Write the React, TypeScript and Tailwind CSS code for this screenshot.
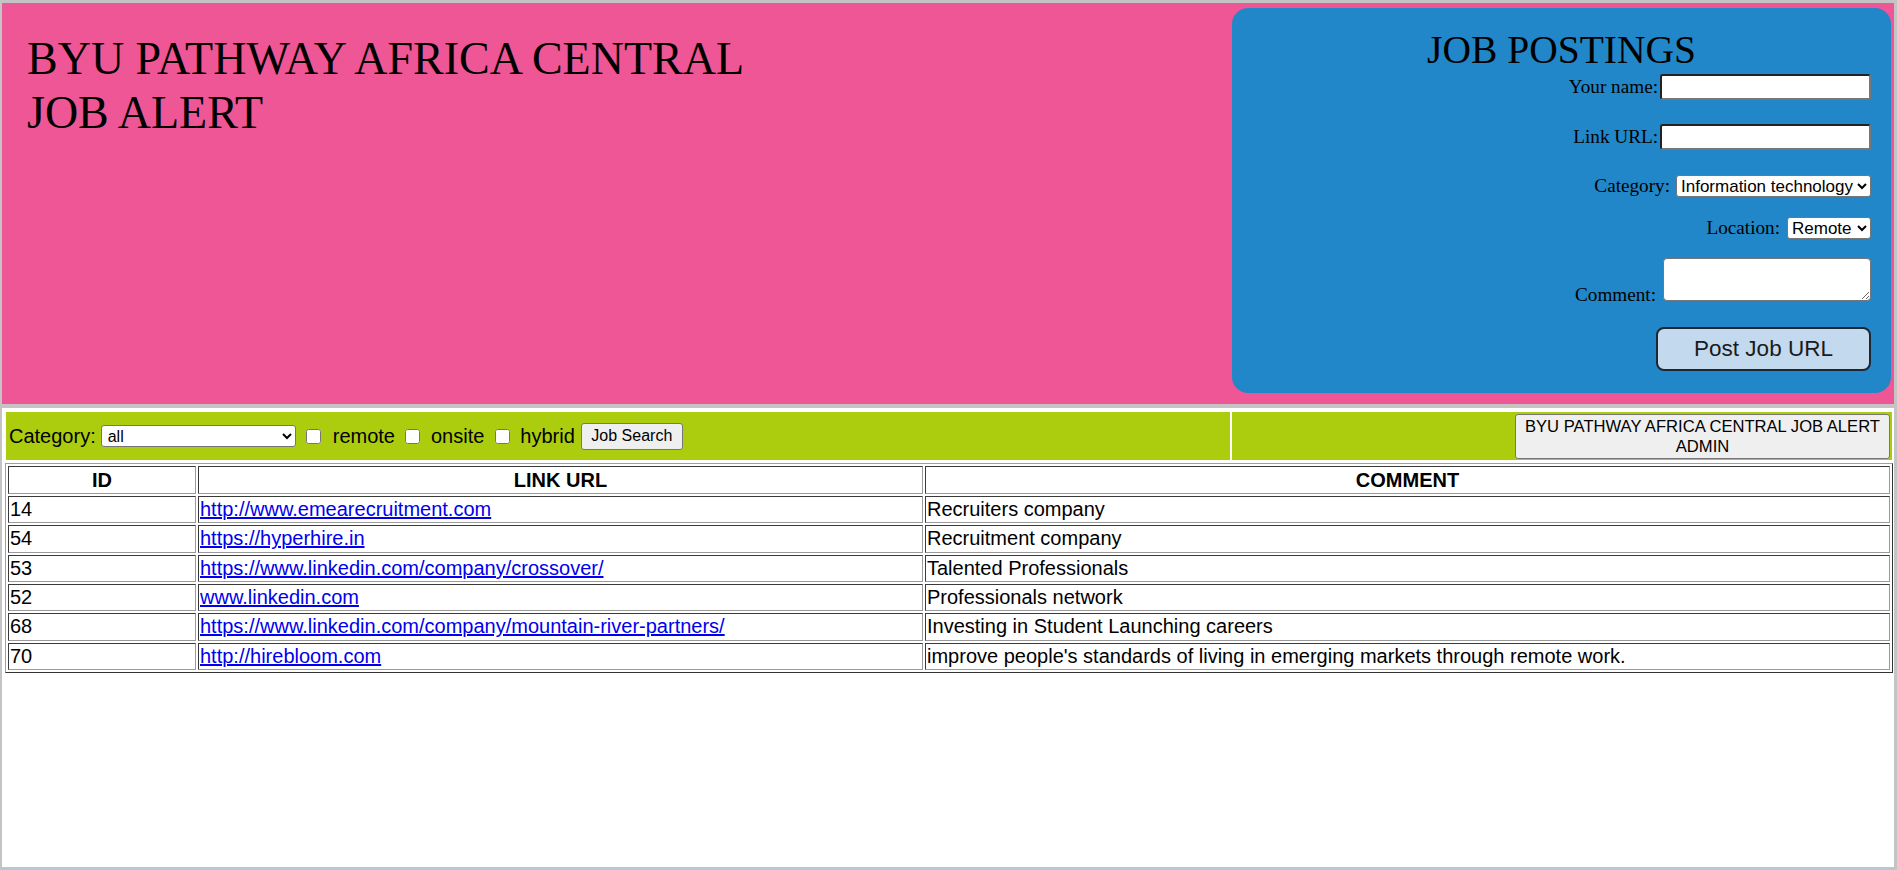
import React from "react"

const jobs = [
  { id: 14, url: "http://www.emearecruitment.com", comment: "Recruiters company" },
  { id: 54, url: "https://hyperhire.in", comment: "Recruitment company" },
  { id: 53, url: "https://www.linkedin.com/company/crossover/", comment: "Talented Professionals" },
  { id: 52, url: "www.linkedin.com", comment: "Professionals network" },
  { id: 68, url: "https://www.linkedin.com/company/mountain-river-partners/", comment: "Investing in Student Launching careers" },
  { id: 70, url: "http://hirebloom.com", comment: "improve people's standards of living in emerging markets through remote work." },
]

const cell =
  "border border-t-[#3a3a3a] border-l-[#3a3a3a] border-r-[#9a9a9a] border-b-[#9a9a9a] p-[1px] align-middle"

const field =
  "bg-white border-2 border-t-[#222] border-l-[#222] border-r-[#777] border-b-[#777] rounded-[3px]"

const PostForm = () => {
  return (
    <div className="w-[659px] h-[385px] mt-[5px] mr-[3px] rounded-[16px] bg-[#2187c9] flex flex-col font-['Liberation_Serif',serif] text-black">
      <h2 className="self-center pt-[22px] text-[39.5px] leading-[40px] font-normal">JOB POSTINGS</h2>
      <div className="flex flex-col items-end pr-[20px] text-[19.2px] leading-[22px]">
        <div className="mt-[4px] h-[26px] flex items-center">
          <label className="mr-[2px]">Your name:</label>
          <input className={`w-[211px] h-[26px] ${field}`} />
        </div>
        <div className="mt-[24px] h-[26px] flex items-center">
          <label className="mr-[2px]">Link URL:</label>
          <input className={`w-[211px] h-[26px] ${field}`} />
        </div>
        <div className="mt-[25px] h-[22px] flex items-center">
          <label className="mr-[6px]">Category:</label>
          <select
            defaultValue="it"
            className="w-[195px] h-[22px] bg-white border border-[#767676] rounded-[3px] font-['Liberation_Sans',sans-serif] text-[17px] leading-[20px]"
          >
            <option value="it">Information technology</option>
          </select>
        </div>
        <div className="mt-[20px] h-[22px] flex items-center">
          <label className="mr-[7px]">Location:</label>
          <select
            defaultValue="remote"
            className="w-[84px] h-[22px] bg-white border border-[#767676] rounded-[3px] font-['Liberation_Sans',sans-serif] text-[17px] leading-[20px]"
          >
            <option value="remote">Remote</option>
          </select>
        </div>
        <div className="mt-[19px] h-[43px] flex items-end">
          <label className="mr-[7px] mb-[-5px]">Comment:</label>
          <textarea className="w-[208px] h-[43px] bg-white border border-[#767676] rounded-[4px] resize" />
        </div>
        <button className="mt-[26px] w-[215px] h-[44px] rounded-[8px] border-2 border-[#1d2733] bg-[#c3d9ee] font-['Liberation_Sans',sans-serif] text-[22.5px] text-[#1b1b1b]">
          Post Job URL
        </button>
      </div>
    </div>
  )
}

export default function App() {
  return (
    <div className="w-[1897px] h-[870px] bg-[#c4c4c4] pt-[3px] pl-[2px] pr-[3px] flex flex-col">
      <header className="h-[401px] bg-[#ef5695] flex justify-between">
        <h1 className="pl-[25px] pt-[29px] font-['Liberation_Serif',serif] text-[46px] leading-[54px] font-normal text-black">
          BYU PATHWAY AFRICA CENTRAL
          <br />
          JOB ALERT
        </h1>
        <PostForm />
      </header>

      <main className="mt-[4px] flex-1 bg-white border-b-[3px] border-b-[#bac6d2] font-['Liberation_Sans',sans-serif] text-black">
        <div className="mt-[4px] ml-[4px] flex gap-[2px] h-[48px]">
          <div className="w-[1224px] bg-[#abcd0e] flex items-center pl-[3px] text-[20px]">
            <span>Category:</span>
            <select
              defaultValue="all"
              className="ml-[5px] w-[195px] h-[22px] bg-white border border-[#767676] rounded-[3px] text-[16px] leading-[20px] pl-[2px]"
            >
              <option value="all">all</option>
            </select>
            <input type="checkbox" className="ml-[10px] w-[15px] h-[15px]" />
            <span className="ml-[12px]">remote</span>
            <input type="checkbox" className="ml-[10px] w-[15px] h-[15px]" />
            <span className="ml-[11px]">onsite</span>
            <input type="checkbox" className="ml-[11px] w-[15px] h-[15px]" />
            <span className="ml-[10px]">hybrid</span>
            <button className="ml-[6px] w-[102px] h-[27px] bg-[#efefef] border border-[#767676] rounded-[3px] text-[16px]">
              Job Search
            </button>
          </div>
          <div className="w-[660px] bg-[#abcd0e] flex justify-end items-start pt-[2px] pr-[2px]">
            <button className="w-[375px] h-[45px] bg-[#efefef] border border-[#767676] rounded-[3px] text-[16.6px] leading-[20px] text-center">
              BYU PATHWAY AFRICA CENTRAL JOB ALERT
              <br />
              ADMIN
            </button>
          </div>
        </div>

        <table className="mt-[3px] ml-[3px] w-[1888px] border-separate border-spacing-[2px] border border-t-[#a0a0a0] border-l-[#a0a0a0] border-r-[#333] border-b-[#333] text-[20px] leading-[23px]">
          <thead>
            <tr>
              <th className={`${cell} w-[188px] h-[28px] text-center font-bold`}>ID</th>
              <th className={`${cell} w-[725px] h-[28px] text-center font-bold`}>LINK URL</th>
              <th className={`${cell} h-[28px] text-center font-bold`}>COMMENT</th>
            </tr>
          </thead>
          <tbody>
            {jobs.map((j) => (
              <tr key={j.id}>
                <td className={`${cell} h-[27.33px]`}>{j.id}</td>
                <td className={`${cell} h-[27.33px]`}>
                  <a href="#" className="text-[#0000ee] underline">
                    {j.url}
                  </a>
                </td>
                <td className={`${cell} h-[27.33px]`}>{j.comment}</td>
              </tr>
            ))}
          </tbody>
        </table>
      </main>
    </div>
  )
}
